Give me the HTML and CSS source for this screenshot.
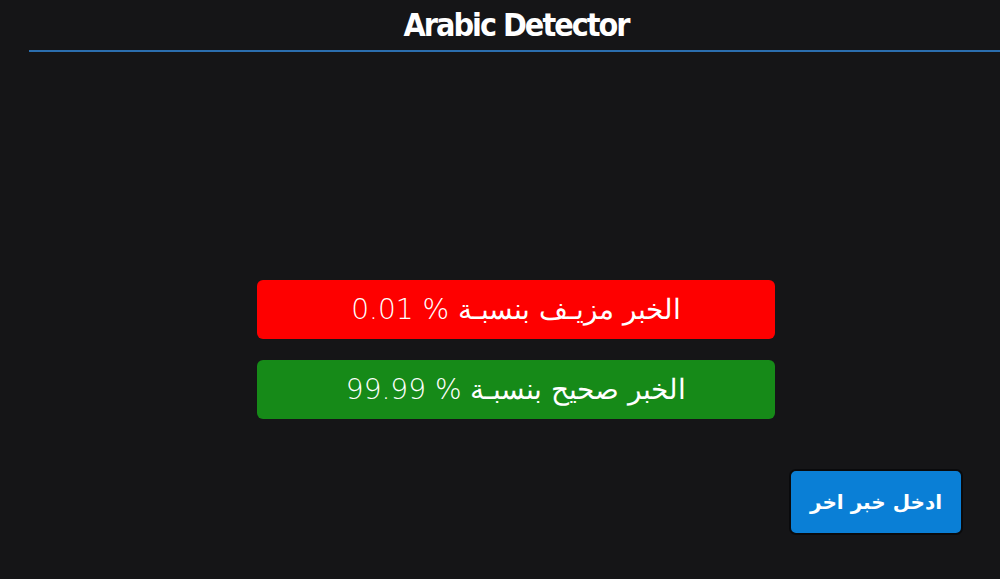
FILE: index.html
```html
<!DOCTYPE html>
<html lang="ar">
<head>
<meta charset="utf-8">
<link rel="stylesheet" href="styles.css">
</head>
<body>
<div class="page">
  <header class="header">
    <h1 class="title">Arabic Detector</h1>
  </header>
  <main class="main">
    <div class="result fake" dir="rtl">الخبر مزيـف بنسبـة % 0.01</div>
    <div class="result real" dir="rtl">الخبر صحيح بنسبـة % 99.99</div>
    <div class="actions">
      <button class="btn" dir="rtl">ادخل خبر اخر</button>
    </div>
  </main>
</div>
</body>
</html>
```
FILE: styles.css
```css
html, body {
  margin: 0;
  padding: 0;
  background: #151517;
  overflow: hidden;
  height: 579px;
}
.page {
  margin-left: 29px;
  width: 974px;
}
.header {
  height: 50px;
  border-bottom: 2px solid #2b6eae;
  display: flex;
  justify-content: center;
  align-items: center;
}
.title {
  margin: 0;
  color: #ffffff;
  font-family: "DejaVu Sans Condensed", "DejaVu Sans", sans-serif;
  font-stretch: condensed;
  font-weight: bold;
  font-size: 32px;
  letter-spacing: -2px;
  line-height: 50px;
}
.main {
  display: flex;
  flex-direction: column;
  align-items: center;
  padding-top: 228px;
}
.result {
  width: 518px;
  height: 59px;
  border-radius: 6px;
  color: #ffffff;
  font-family: "DejaVu Sans", sans-serif;
  font-weight: 300;
  font-size: 28px;
  display: flex;
  justify-content: center;
  align-items: center;
  box-sizing: border-box;
}
.fake {
  background: #fe0000;
}
.real {
  background: #168a18;
  margin-top: 21px;
}
.actions {
  align-self: stretch;
  display: flex;
  justify-content: flex-end;
  padding-right: 40px;
  margin-top: 50px;
}
.btn {
  width: 174px;
  height: 66px;
  background: #0a7fd6;
  border: 2px solid #0a0a0c;
  border-radius: 7px;
  color: #ffffff;
  font-family: "DejaVu Sans", sans-serif;
  font-weight: bold;
  font-size: 20px;
}
```
